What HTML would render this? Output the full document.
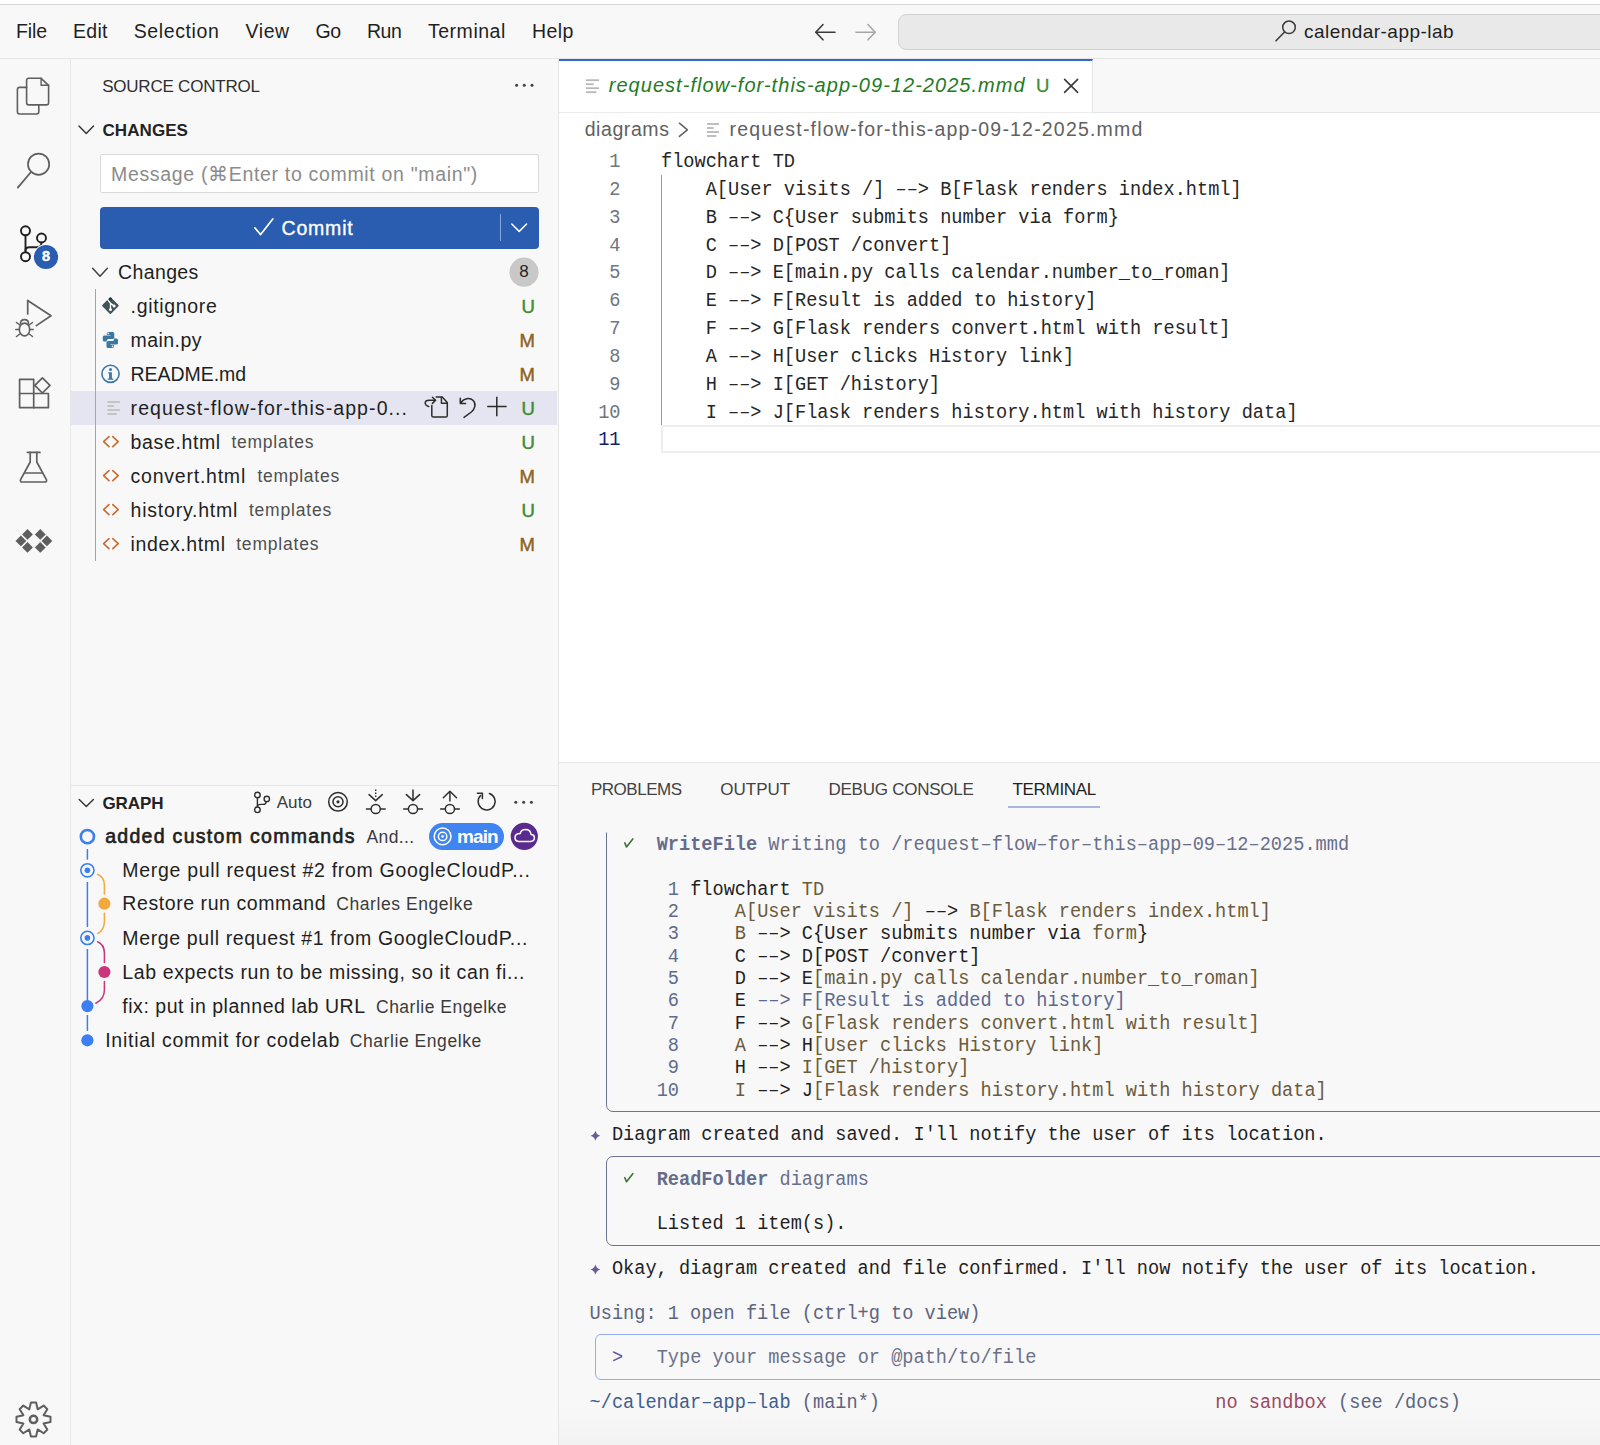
<!DOCTYPE html>
<html><head><meta charset="utf-8"><style>
html,body{margin:0;padding:0;}
body{width:1600px;height:1445px;overflow:hidden;position:relative;background:#f8f8f8;font-family:"Liberation Sans", sans-serif;}
.t{position:absolute;white-space:pre;line-height:1;}
.r{position:absolute;box-sizing:border-box;}
</style></head><body>
<div class="r" style="left:0px;top:0px;width:1600px;height:4px;background:#fff"></div>
<div class="r" style="left:0px;top:4px;width:1600px;height:1px;background:#d6d6d6"></div>
<div class="r" style="left:0px;top:58px;width:1600px;height:1px;background:#e5e5e5"></div>
<div class="r" style="left:898px;top:14px;width:720px;height:36px;background:#e9e9e9;border:1px solid #d2d2d2;border-radius:8px"></div>
<div class="r" style="left:70px;top:59px;width:1px;height:1386px;background:#e7e7e7"></div>
<div class="r" style="left:558px;top:59px;width:1px;height:1386px;background:#e5e5e5"></div>
<div class="r" style="left:100px;top:154px;width:439px;height:39px;background:#fff;border:1px solid #dadada;border-radius:2px"></div>
<div class="r" style="left:100px;top:207px;width:439px;height:42px;background:#2a5db0;border-radius:4px"></div>
<div class="r" style="left:500px;top:214px;width:1.3px;height:27px;background:#86a6dc"></div>
<div class="r" style="left:71px;top:391px;width:486px;height:34px;background:#e4e5f0"></div>
<div class="r" style="left:95px;top:289px;width:1px;height:272px;background:#a5a5a5"></div>
<div class="r" style="left:71px;top:785px;width:487px;height:1px;background:#e5e5e5"></div>
<div class="r" style="left:429.2px;top:822.8px;width:75.3px;height:27px;background:#3f84f0;border-radius:13.5px"></div>
<div class="r" style="left:559px;top:59px;width:1041px;height:54px;background:#f8f8f8;border-bottom:1px solid #e5e5e5"></div>
<div class="r" style="left:559px;top:59px;width:534px;height:54px;background:#fff;border-top:2px solid #3169c4;border-right:1px solid #e5e5e5;border-bottom:1px solid #ececec"></div>
<div class="r" style="left:559px;top:113px;width:1041px;height:649px;background:#fff"></div>
<div class="r" style="left:661px;top:425px;width:1000px;height:28px;border:2px solid #eeeeee;border-right:none"></div>
<div class="r" style="left:661px;top:174.5px;width:1.4px;height:250.5px;background:#9a9a9a"></div>
<div class="r" style="left:559px;top:762px;width:1041px;height:683px;background:#f8f8f8;border-top:1px solid #e5e5e5"></div>
<div class="r" style="left:1008px;top:805.5px;width:91.5px;height:2px;background:#aab6da"></div>
<div class="r" style="left:605.5px;top:820px;width:1100px;height:292px;border:1.8px solid #6d7290;border-radius:7px;clip-path:inset(12.5px -2px -2px -2px)"></div>
<div class="r" style="left:605.5px;top:1155.5px;width:1100px;height:90.5px;border:1.8px solid #6d7290;border-radius:7px"></div>
<div class="r" style="left:594.5px;top:1334px;width:1100px;height:46px;border:1.8px solid #8eaef0;border-radius:6px"></div>
<div class="r" style="left:559px;top:1405px;width:1041px;height:40px;background:linear-gradient(to bottom, rgba(0,0,0,0), rgba(0,0,0,0.025))"></div>
<svg class="r" style="left:0;top:0" width="1600" height="1445" viewBox="0 0 1600 1445" fill="none"><polyline points="823,24.5 815.8,32.2 823,39.8" stroke="#3b3b3b" stroke-width="1.6" fill="none" stroke-linejoin="round" stroke-linecap="round"/><line x1="816.2" y1="32.2" x2="835" y2="32.2" stroke="#3b3b3b" stroke-width="1.6" stroke-linecap="round"/><polyline points="868,24.5 875.2,32.2 868,39.8" stroke="#a6a6a6" stroke-width="1.6" fill="none" stroke-linejoin="round" stroke-linecap="round"/><line x1="856" y1="32.2" x2="874.8" y2="32.2" stroke="#a6a6a6" stroke-width="1.6" stroke-linecap="round"/><circle cx="1289" cy="27.3" r="6.3" stroke="#3b3b3b" stroke-width="1.5" fill="none"/><line x1="1284.6" y1="32" x2="1276" y2="40.8" stroke="#3b3b3b" stroke-width="1.6" stroke-linecap="round"/><path d="M26.6 87.4 H19.6 Q17.4 87.4 17.4 89.6 V111.8 Q17.4 114 19.6 114 H36.6 Q38.8 114 38.8 111.8 V104.9" stroke="#5f5f5f" stroke-width="1.6" fill="none" stroke-linejoin="round" stroke-linecap="round" /><path d="M28.8 78.3 H41.1 L48.6 85.3 V102.7 Q48.6 104.9 46.4 104.9 H28.8 Q26.6 104.9 26.6 102.7 V80.5 Q26.6 78.3 28.8 78.3 Z" stroke="#5f5f5f" stroke-width="1.6" fill="none" stroke-linejoin="round" stroke-linecap="round" /><path d="M41.1 78.3 V85.3 H48.6" stroke="#5f5f5f" stroke-width="1.4" fill="none" stroke-linejoin="round" stroke-linecap="round" /><circle cx="38.6" cy="164.2" r="10.6" stroke="#5f5f5f" stroke-width="1.7" fill="none"/><line x1="31" y1="172" x2="17.8" y2="187.6" stroke="#5f5f5f" stroke-width="1.8" stroke-linecap="round"/><circle cx="25.5" cy="230.8" r="4.5" stroke="#1f1f1f" stroke-width="1.9" fill="none"/><circle cx="41.5" cy="238" r="4.5" stroke="#1f1f1f" stroke-width="1.9" fill="none"/><circle cx="25.5" cy="256.7" r="4.5" stroke="#1f1f1f" stroke-width="1.9" fill="none"/><line x1="25.5" y1="235.3" x2="25.5" y2="252.2" stroke="#1f1f1f" stroke-width="1.9" stroke-linecap="butt"/><path d="M25.5 250.5 C25.5 248.2 27 247.3 29.5 247.3 H36.5 C39.5 247.3 41.5 245.6 41.5 242.5" stroke="#1f1f1f" stroke-width="1.9" fill="none" stroke-linejoin="round" stroke-linecap="round" /><circle cx="46" cy="257" r="12.9" fill="#f8f8f8"/><circle cx="46" cy="257" r="12.1" fill="#2a5db0"/><path d="M27.7 300.5 V314" stroke="#5f5f5f" stroke-width="1.7" fill="none" stroke-linejoin="round" stroke-linecap="round" /><path d="M27.7 300.5 L51 315.7 L36.3 325.6" stroke="#5f5f5f" stroke-width="1.7" fill="none" stroke-linejoin="round" stroke-linecap="round" /><path d="M20.5 323.5 Q20.5 319.6 24.5 319.6 Q28.5 319.6 28.5 323.5" stroke="#5f5f5f" stroke-width="1.6" fill="none" stroke-linejoin="round" stroke-linecap="round" /><ellipse cx="24.5" cy="329.5" rx="5.2" ry="6.4" stroke="#5f5f5f" stroke-width="1.6" fill="none"/><line x1="15.8" y1="329.5" x2="19.3" y2="329.5" stroke="#5f5f5f" stroke-width="1.5" stroke-linecap="round"/><line x1="29.7" y1="329.5" x2="33.2" y2="329.5" stroke="#5f5f5f" stroke-width="1.5" stroke-linecap="round"/><line x1="16.5" y1="322.5" x2="19.8" y2="325" stroke="#5f5f5f" stroke-width="1.5" stroke-linecap="round"/><line x1="32.5" y1="322.5" x2="29.2" y2="325" stroke="#5f5f5f" stroke-width="1.5" stroke-linecap="round"/><line x1="16.5" y1="336.5" x2="19.8" y2="334" stroke="#5f5f5f" stroke-width="1.5" stroke-linecap="round"/><line x1="32.5" y1="336.5" x2="29.2" y2="334" stroke="#5f5f5f" stroke-width="1.5" stroke-linecap="round"/><path d="M19.6 379.3 H33.7 V407.7 H19.6 Z" stroke="#5f5f5f" stroke-width="1.7" fill="none" stroke-linejoin="round" stroke-linecap="round" /><path d="M19.6 393.5 H48.4 V407.7 H33.7" stroke="#5f5f5f" stroke-width="1.7" fill="none" stroke-linejoin="round" stroke-linecap="round" /><path d="M42.4 377.8 L50 385.4 L42.4 393 L34.8 385.4 Z" stroke="#5f5f5f" stroke-width="1.7" fill="none" stroke-linejoin="round" stroke-linecap="round" /><path d="M27.4 452.4 H40" stroke="#5f5f5f" stroke-width="1.7" fill="none" stroke-linejoin="round" stroke-linecap="round" /><path d="M30.2 452.4 V462 L20.6 479.6 Q19.8 482 22.4 482 H44.6 Q47.2 482 46.4 479.6 L36.8 462 V452.4" stroke="#5f5f5f" stroke-width="1.7" fill="none" stroke-linejoin="round" stroke-linecap="round" /><line x1="24.8" y1="473" x2="42.2" y2="473" stroke="#5f5f5f" stroke-width="1.7" stroke-linecap="round"/><path d="M27.5 529.0 L32.9 534.4 L27.5 539.8 L22.1 534.4 Z" fill="#5f5f5f"/><path d="M20.9 535.5 L26.299999999999997 540.9 L20.9 546.3 L15.499999999999998 540.9 Z" fill="#5f5f5f"/><path d="M27.5 542.0 L32.9 547.4 L27.5 552.8 L22.1 547.4 Z" fill="#5f5f5f"/><path d="M40.3 529.0 L45.699999999999996 534.4 L40.3 539.8 L34.9 534.4 Z" fill="#5f5f5f"/><path d="M46.9 535.5 L52.3 540.9 L46.9 546.3 L41.5 540.9 Z" fill="#5f5f5f"/><path d="M40.3 542.0 L45.699999999999996 547.4 L40.3 552.8 L34.9 547.4 Z" fill="#5f5f5f"/><polygon points="29.33,1409.33 30.93,1402.39 36.07,1402.39 37.67,1409.33 43.71,1405.56 47.34,1409.19 43.57,1415.23 50.51,1416.83 50.51,1421.97 43.57,1423.57 47.34,1429.61 43.71,1433.24 37.67,1429.47 36.07,1436.41 30.93,1436.41 29.33,1429.47 23.29,1433.24 19.66,1429.61 23.43,1423.57 16.49,1421.97 16.49,1416.83 23.43,1415.23 19.66,1409.19 23.29,1405.56" stroke="#5f5f5f" stroke-width="2" fill="none" stroke-linejoin="round"/><circle cx="33.5" cy="1419.4" r="3.7" stroke="#5f5f5f" stroke-width="2.5" fill="none"/><circle cx="516.6" cy="85.3" r="1.5" fill="#424242"/><circle cx="524.3" cy="85.3" r="1.5" fill="#424242"/><circle cx="532" cy="85.3" r="1.5" fill="#424242"/><polyline points="79,126 86.25,133.6 93.5,126" stroke="#333333" stroke-width="1.4" fill="none" stroke-linejoin="round" stroke-linecap="round"/><polyline points="254.8,227.8 260.6,234.6 272.8,219" stroke="#fff" stroke-width="1.7" fill="none" stroke-linejoin="round" stroke-linecap="round"/><polyline points="511.8,224 519.2,231.4 526.6,224" stroke="#fff" stroke-width="1.5" fill="none" stroke-linejoin="round" stroke-linecap="round"/><polyline points="92.6,268.2 100.0,276.2 107.4,268.2" stroke="#424242" stroke-width="1.5" fill="none" stroke-linejoin="round" stroke-linecap="round"/><circle cx="524" cy="272.2" r="14.6" fill="#c8c8c8"/><path d="M110.4 298.20000000000005 L117.80000000000001 305.6 L110.4 313.0 L103.0 305.6 Z" fill="#41535b" stroke="#41535b" stroke-width="1.8" stroke-linejoin="round"/><path d="M107.0 298.6 L110.5 303.40000000000003 V309.40000000000003" stroke="#fff" stroke-width="1.3" fill="none" stroke-linejoin="round" stroke-linecap="round" /><path d="M110.5 303.40000000000003 L114.10000000000001 305.90000000000003" stroke="#fff" stroke-width="1.3" fill="none" stroke-linejoin="round" stroke-linecap="round" /><circle cx="110.5" cy="309.5" r="1.5" fill="#fff"/><circle cx="114.10000000000001" cy="305.90000000000003" r="1.5" fill="#fff"/><circle cx="110.35000000000001" cy="299.1" r="1.7" fill="#263a44"/><g transform="translate(102.8 332)"><path d="M6.2 0 H9.9 Q11.5 0 11.5 1.6 V5.4 Q11.5 7 9.9 7 H5.6 Q4 7 4 8.6 V9.6 H1.6 Q0 9.6 0 8 V5.1 Q0 3.5 1.6 3.5 H7.6 V2.9 H4 V1.6 Q4 0 6.2 0 Z" fill="#3a77a3"/><path d="M9 16 H5.3 Q3.7 16 3.7 14.4 V10.6 Q3.7 9 5.3 9 H9.6 Q11.2 9 11.2 7.4 V6.4 H13.6 Q15.2 6.4 15.2 8 V10.9 Q15.2 12.5 13.6 12.5 H7.6 V13.1 H11.2 V14.4 Q11.2 16 9 16 Z" fill="#3a77a3"/><circle cx="5.5" cy="1.6" r="0.8" fill="#f8f8f8"/><circle cx="9.7" cy="14.4" r="0.8" fill="#f8f8f8"/></g><circle cx="110.5" cy="373.8" r="8.6" stroke="#3a77a3" stroke-width="1.6" fill="none"/><circle cx="110.5" cy="369.6" r="1.5" fill="#3a77a3"/><path d="M108.2 372.3 H111.9 V378.6 H113.3 V379.8 H107.8 V378.6 H109.1 V373.5 H108.2 Z" fill="#3a77a3"/><line x1="107.4" y1="402" x2="119.8" y2="402" stroke="#c4c4c4" stroke-width="2" stroke-linecap="butt"/><line x1="107.4" y1="406" x2="114" y2="406" stroke="#c4c4c4" stroke-width="2" stroke-linecap="butt"/><line x1="107.4" y1="410" x2="119.8" y2="410" stroke="#c4c4c4" stroke-width="2" stroke-linecap="butt"/><line x1="107.4" y1="414" x2="116.8" y2="414" stroke="#c4c4c4" stroke-width="2" stroke-linecap="butt"/><polyline points="109,436.6 103.6,441.6 109,446.6" stroke="#c86b2f" stroke-width="1.6" fill="none" stroke-linejoin="round" stroke-linecap="round"/><polyline points="112.8,436.6 118.2,441.6 112.8,446.6" stroke="#c86b2f" stroke-width="1.6" fill="none" stroke-linejoin="round" stroke-linecap="round"/><polyline points="109,470.6 103.6,475.6 109,480.6" stroke="#c86b2f" stroke-width="1.6" fill="none" stroke-linejoin="round" stroke-linecap="round"/><polyline points="112.8,470.6 118.2,475.6 112.8,480.6" stroke="#c86b2f" stroke-width="1.6" fill="none" stroke-linejoin="round" stroke-linecap="round"/><polyline points="109,504.6 103.6,509.6 109,514.6" stroke="#c86b2f" stroke-width="1.6" fill="none" stroke-linejoin="round" stroke-linecap="round"/><polyline points="112.8,504.6 118.2,509.6 112.8,514.6" stroke="#c86b2f" stroke-width="1.6" fill="none" stroke-linejoin="round" stroke-linecap="round"/><polyline points="109,538.6 103.6,543.6 109,548.6" stroke="#c86b2f" stroke-width="1.6" fill="none" stroke-linejoin="round" stroke-linecap="round"/><polyline points="112.8,538.6 118.2,543.6 112.8,548.6" stroke="#c86b2f" stroke-width="1.6" fill="none" stroke-linejoin="round" stroke-linecap="round"/><path d="M431.8 405.6 V415.4 Q431.8 417 433.4 417 H445.7 Q447.3 417 447.3 415.4 V402.4 L442.2 397.1 H436.2" stroke="#2b2b2b" stroke-width="1.5" fill="none" stroke-linejoin="round" stroke-linecap="round" /><path d="M441.4 397.3 V403.2 H447.1" stroke="#2b2b2b" stroke-width="1.4" fill="none" stroke-linejoin="round" stroke-linecap="round" /><path d="M428.8 406.6 Q425.2 405.6 425.2 402.8 Q425.2 400.2 429.2 400.2 H435.4" stroke="#2b2b2b" stroke-width="1.5" fill="none" stroke-linejoin="round" stroke-linecap="round" /><polyline points="432.4,397.2 435.6,400.2 432.4,403.4" stroke="#2b2b2b" stroke-width="1.5" fill="none" stroke-linejoin="round" stroke-linecap="round"/><path d="M460.3 398.2 V403.5 H465.6" stroke="#2b2b2b" stroke-width="1.5" fill="none" stroke-linejoin="round" stroke-linecap="round" /><path d="M460.8 403 C463.4 398.5 469.6 396.8 473.2 400.6 C476.4 404 475 409 471.4 412 L464 417.4" stroke="#2b2b2b" stroke-width="1.5" fill="none" stroke-linejoin="round" stroke-linecap="round" /><line x1="496.8" y1="396.8" x2="496.8" y2="416.2" stroke="#2b2b2b" stroke-width="1.5" stroke-linecap="butt"/><line x1="487.2" y1="406.5" x2="506.6" y2="406.5" stroke="#2b2b2b" stroke-width="1.5" stroke-linecap="butt"/><polyline points="79.2,799.4 86.30000000000001,806.6 93.4,799.4" stroke="#333333" stroke-width="1.4" fill="none" stroke-linejoin="round" stroke-linecap="round"/><circle cx="257.4" cy="795" r="2.8" stroke="#2e2e2e" stroke-width="1.4" fill="none"/><circle cx="257.4" cy="809.8" r="2.8" stroke="#2e2e2e" stroke-width="1.4" fill="none"/><circle cx="266.8" cy="798.9" r="2.7" stroke="#2e2e2e" stroke-width="1.4" fill="none"/><line x1="257.4" y1="797.8" x2="257.4" y2="807" stroke="#2e2e2e" stroke-width="1.4" stroke-linecap="butt"/><path d="M257.4 806.2 C257.6 804.8 259 804.4 261 804.4 H263.4 C265 804.4 266 803.2 266.3 801.6" stroke="#2e2e2e" stroke-width="1.4" fill="none" stroke-linejoin="round" stroke-linecap="round" /><circle cx="338" cy="801.8" r="9.3" stroke="#2e2e2e" stroke-width="1.5" fill="none"/><circle cx="338" cy="801.8" r="5" stroke="#2e2e2e" stroke-width="1.5" fill="none"/><circle cx="338" cy="801.8" r="1.6" fill="#2e2e2e"/><circle cx="375.7" cy="809" r="4.6" stroke="#2e2e2e" stroke-width="1.5" fill="none"/><line x1="365.9" y1="809" x2="371.09999999999997" y2="809" stroke="#2e2e2e" stroke-width="1.5" stroke-linecap="butt"/><line x1="380.3" y1="809" x2="385.7" y2="809" stroke="#2e2e2e" stroke-width="1.5" stroke-linecap="butt"/><line x1="375.7" y1="789.6" x2="375.7" y2="798" stroke="#2e2e2e" stroke-width="1.4" stroke-dasharray="1.4 1.6"/><polyline points="369.09999999999997,794.6 375.7,800.6 382.3,794.6" stroke="#2e2e2e" stroke-width="1.5" fill="none" stroke-linejoin="round" stroke-linecap="round"/><circle cx="413" cy="809" r="4.6" stroke="#2e2e2e" stroke-width="1.5" fill="none"/><line x1="403.2" y1="809" x2="408.4" y2="809" stroke="#2e2e2e" stroke-width="1.5" stroke-linecap="butt"/><line x1="417.6" y1="809" x2="423" y2="809" stroke="#2e2e2e" stroke-width="1.5" stroke-linecap="butt"/><line x1="413" y1="789.6" x2="413" y2="800.4" stroke="#2e2e2e" stroke-width="1.5" stroke-linecap="butt"/><polyline points="406.4,794.6 413,800.6 419.6,794.6" stroke="#2e2e2e" stroke-width="1.5" fill="none" stroke-linejoin="round" stroke-linecap="round"/><circle cx="449.9" cy="809" r="4.6" stroke="#2e2e2e" stroke-width="1.5" fill="none"/><line x1="440.09999999999997" y1="809" x2="445.29999999999995" y2="809" stroke="#2e2e2e" stroke-width="1.5" stroke-linecap="butt"/><line x1="454.5" y1="809" x2="459.9" y2="809" stroke="#2e2e2e" stroke-width="1.5" stroke-linecap="butt"/><line x1="449.9" y1="791.4" x2="449.9" y2="801.6" stroke="#2e2e2e" stroke-width="1.5" stroke-linecap="butt"/><polyline points="443.29999999999995,797.8 449.9,791.2 456.5,797.8" stroke="#2e2e2e" stroke-width="1.5" fill="none" stroke-linejoin="round" stroke-linecap="round"/><path d="M489.4 793.5 A8.5 8.5 0 1 1 480.6 795.6" stroke="#2e2e2e" stroke-width="1.5" fill="none" stroke-linejoin="round" stroke-linecap="round" /><polyline points="477.4,793.3 482.4,793.3 482.4,798.4" stroke="#2e2e2e" stroke-width="1.5" fill="none" stroke-linejoin="round" stroke-linecap="round"/><circle cx="515.8" cy="802.2" r="1.5" fill="#424242"/><circle cx="523.6" cy="802.2" r="1.5" fill="#424242"/><circle cx="531.4" cy="802.2" r="1.5" fill="#424242"/><line x1="87.4" y1="849" x2="87.4" y2="859.6" stroke="#3b7ff2" stroke-width="1.5" stroke-linecap="butt"/><line x1="87.4" y1="882" x2="87.4" y2="927" stroke="#3b7ff2" stroke-width="1.5" stroke-linecap="butt"/><line x1="87.4" y1="949" x2="87.4" y2="1000.4" stroke="#3b7ff2" stroke-width="1.5" stroke-linecap="butt"/><line x1="87.4" y1="1015" x2="87.4" y2="1031" stroke="#3b7ff2" stroke-width="1.5" stroke-linecap="butt"/><circle cx="87.4" cy="836.6" r="6.6" stroke="#3b7ff2" stroke-width="2.6" fill="none"/><circle cx="87.4" cy="870.3" r="6.6" stroke="#3b7ff2" stroke-width="1.6" fill="none"/><circle cx="87.4" cy="870.3" r="2.8" fill="#3b7ff2"/><circle cx="87.4" cy="937.9" r="6.6" stroke="#3b7ff2" stroke-width="1.6" fill="none"/><circle cx="87.4" cy="937.9" r="2.8" fill="#3b7ff2"/><circle cx="104.4" cy="903.7" r="6.1" fill="#f2a93b"/><circle cx="104.4" cy="972" r="6.1" fill="#c8357a"/><circle cx="87.4" cy="1006.1" r="6.1" fill="#3b7ff2"/><circle cx="87.4" cy="1040.3" r="6.1" fill="#3b7ff2"/><path d="M97.6 874.3 C102.8 876.5 104.4 881 104.4 885.5 V894" stroke="#f2a93b" stroke-width="1.5" fill="none" stroke-linejoin="round" stroke-linecap="round" /><path d="M104.4 913.3 V921 C104.4 926 102.4 931 97.8 933.6" stroke="#f2a93b" stroke-width="1.5" fill="none" stroke-linejoin="round" stroke-linecap="round" /><path d="M97.6 941.8 C102.8 944 104.4 948.5 104.4 953 V962.4" stroke="#c8357a" stroke-width="1.5" fill="none" stroke-linejoin="round" stroke-linecap="round" /><path d="M104.4 981.6 V990 C104.4 995 101.8 1000.4 95.8 1003.2" stroke="#c8357a" stroke-width="1.5" fill="none" stroke-linejoin="round" stroke-linecap="round" /><circle cx="442.6" cy="836.4" r="8.4" stroke="#fff" stroke-width="1.5" fill="none"/><circle cx="442.6" cy="836.4" r="4.2" stroke="#fff" stroke-width="1.5" fill="none"/><circle cx="442.6" cy="836.4" r="1.3" fill="#fff"/><circle cx="524.3" cy="836.3" r="13.6" fill="#5b2a8e"/><path d="M518.6 841.4 H530.4 C533.2 841.4 534.4 839.6 534.4 837.8 C534.4 835.8 532.9 834.4 531 834.4 C530.6 831.6 528.2 829.6 525.4 829.6 C522.8 829.6 520.8 831.2 520.1 833.5 C517 833.5 515 835.2 515 837.6 C515 839.8 516.6 841.4 518.6 841.4 Z" stroke="#fff" stroke-width="1.5" fill="none" stroke-linejoin="round" stroke-linecap="round" /><line x1="586" y1="80.2" x2="599" y2="80.2" stroke="#b8b8b8" stroke-width="1.8" stroke-linecap="butt"/><line x1="586" y1="84.2" x2="593.6" y2="84.2" stroke="#b8b8b8" stroke-width="1.8" stroke-linecap="butt"/><line x1="586" y1="88.2" x2="599" y2="88.2" stroke="#b8b8b8" stroke-width="1.8" stroke-linecap="butt"/><line x1="586" y1="92.2" x2="596.4" y2="92.2" stroke="#b8b8b8" stroke-width="1.8" stroke-linecap="butt"/><line x1="1064.6" y1="79.4" x2="1077.6" y2="92.4" stroke="#3b3b3b" stroke-width="1.6" stroke-linecap="round"/><line x1="1077.6" y1="79.4" x2="1064.6" y2="92.4" stroke="#3b3b3b" stroke-width="1.6" stroke-linecap="round"/><polyline points="679.4,123.2 687.4,129.8 679.4,136.4" stroke="#616161" stroke-width="1.5" fill="none" stroke-linejoin="round" stroke-linecap="round"/><line x1="707" y1="124" x2="719" y2="124" stroke="#b8b8b8" stroke-width="1.8" stroke-linecap="butt"/><line x1="707" y1="128" x2="713.6" y2="128" stroke="#b8b8b8" stroke-width="1.8" stroke-linecap="butt"/><line x1="707" y1="132" x2="719" y2="132" stroke="#b8b8b8" stroke-width="1.8" stroke-linecap="butt"/><line x1="707" y1="136" x2="716.4" y2="136" stroke="#b8b8b8" stroke-width="1.8" stroke-linecap="butt"/><path d="M624.8 842.9 L626.5 846.9 L632.8 838.9" stroke="#3d6f35" stroke-width="1.6" fill="none" stroke-linejoin="round" stroke-linecap="round" /><path d="M595.4 1130.66 Q596.4 1134.66 600.1999999999999 1135.66 Q596.4 1136.66 595.4 1140.66 Q594.4 1136.66 590.6 1135.66 Q594.4 1134.66 595.4 1130.66 Z" fill="#6a5a96"/><path d="M624.8 1177.6999999999998 L626.5 1181.6999999999998 L632.8 1173.6999999999998" stroke="#3d6f35" stroke-width="1.6" fill="none" stroke-linejoin="round" stroke-linecap="round" /><path d="M595.4 1264.58 Q596.4 1268.58 600.1999999999999 1269.58 Q596.4 1270.58 595.4 1274.58 Q594.4 1270.58 590.6 1269.58 Q594.4 1268.58 595.4 1264.58 Z" fill="#6a5a96"/></svg>
<span id="t0" class="t" style="left:16.00px;top:21.89px;font-size:19.5px;color:#1f1f1f;letter-spacing:-0.130px;">File</span>
<span id="t1" class="t" style="left:73.00px;top:21.89px;font-size:19.5px;color:#1f1f1f;letter-spacing:0.298px;">Edit</span>
<span id="t2" class="t" style="left:133.70px;top:21.89px;font-size:19.5px;color:#1f1f1f;letter-spacing:0.607px;">Selection</span>
<span id="t3" class="t" style="left:245.60px;top:21.89px;font-size:19.5px;color:#1f1f1f;letter-spacing:0.545px;">View</span>
<span id="t4" class="t" style="left:315.40px;top:21.89px;font-size:19.5px;color:#1f1f1f;letter-spacing:-0.258px;">Go</span>
<span id="t5" class="t" style="left:367.00px;top:21.89px;font-size:19.5px;color:#1f1f1f;letter-spacing:-0.494px;">Run</span>
<span id="t6" class="t" style="left:428.00px;top:21.89px;font-size:19.5px;color:#1f1f1f;letter-spacing:0.512px;">Terminal</span>
<span id="t7" class="t" style="left:532.00px;top:21.89px;font-size:19.5px;color:#1f1f1f;letter-spacing:0.448px;">Help</span>
<span id="t8" class="t" style="left:1304.00px;top:21.71px;font-size:19px;color:#1f1f1f;letter-spacing:0.462px;">calendar-app-lab</span>
<span class="t" style="left:34px;top:248.6px;width:24px;text-align:center;font-size:14.5px;font-weight:700;color:#fff;-webkit-text-stroke:0.4px #fff">8</span>
<span id="t9" class="t" style="left:102.20px;top:78.01px;font-size:17px;color:#2e2e2e;letter-spacing:-0.220px;">SOURCE CONTROL</span>
<span id="t10" class="t" style="left:102.50px;top:121.61px;font-size:17px;color:#222222;font-weight:700;letter-spacing:0.069px;">CHANGES</span>
<span id="t11" class="t" style="left:111.00px;top:165.09px;font-size:19.5px;color:#8b8b8b;letter-spacing:0.675px;">Message (⌘Enter to commit on "main")</span>
<span id="t12" class="t" style="left:281.50px;top:219.29px;font-size:19.5px;color:#fff;letter-spacing:0.805px;-webkit-text-stroke:0.35px #fff;">Commit</span>
<span id="t13" class="t" style="left:118.00px;top:263.09px;font-size:19.5px;color:#1f1f1f;letter-spacing:0.377px;">Changes</span>
<span class="t" style="left:509.4px;top:263.2px;width:29.2px;text-align:center;font-size:17px;color:#1f1f1f">8</span>
<span id="t14" class="t" style="left:130.60px;top:296.79px;font-size:19.5px;color:#1f1f1f;letter-spacing:0.668px;">.gitignore</span>
<span id="t15" class="t" style="left:521.60px;top:297.64px;font-size:18.5px;color:#3f8c35;letter-spacing:-1.766px;-webkit-text-stroke:0.45px #3f8c35;">U</span>
<span id="t16" class="t" style="left:130.60px;top:330.79px;font-size:19.5px;color:#1f1f1f;letter-spacing:0.431px;">main.py</span>
<span id="t17" class="t" style="left:519.40px;top:331.64px;font-size:18.5px;color:#8d6424;letter-spacing:-1.822px;-webkit-text-stroke:0.45px #8d6424;">M</span>
<span id="t18" class="t" style="left:130.60px;top:364.79px;font-size:19.5px;color:#1f1f1f;letter-spacing:-0.060px;">README.md</span>
<span id="t19" class="t" style="left:519.40px;top:365.64px;font-size:18.5px;color:#8d6424;letter-spacing:-1.822px;-webkit-text-stroke:0.45px #8d6424;">M</span>
<span id="t20" class="t" style="left:130.60px;top:398.79px;font-size:19.5px;color:#1f1f1f;letter-spacing:1.085px;">request-flow-for-this-app-0...</span>
<span id="t21" class="t" style="left:521.60px;top:399.64px;font-size:18.5px;color:#3f8c35;letter-spacing:-1.766px;-webkit-text-stroke:0.45px #3f8c35;">U</span>
<span id="t22" class="t" style="left:130.60px;top:432.79px;font-size:19.5px;color:#1f1f1f;letter-spacing:0.628px;">base.html</span>
<span id="t23" class="t" style="left:231.40px;top:434.48px;font-size:17.5px;color:#4f4f4f;letter-spacing:0.769px;">templates</span>
<span id="t24" class="t" style="left:521.60px;top:433.64px;font-size:18.5px;color:#3f8c35;letter-spacing:-1.766px;-webkit-text-stroke:0.45px #3f8c35;">U</span>
<span id="t25" class="t" style="left:130.60px;top:466.79px;font-size:19.5px;color:#1f1f1f;letter-spacing:0.765px;">convert.html</span>
<span id="t26" class="t" style="left:257.40px;top:468.48px;font-size:17.5px;color:#4f4f4f;letter-spacing:0.736px;">templates</span>
<span id="t27" class="t" style="left:519.40px;top:467.64px;font-size:18.5px;color:#8d6424;letter-spacing:-1.822px;-webkit-text-stroke:0.45px #8d6424;">M</span>
<span id="t28" class="t" style="left:130.60px;top:500.79px;font-size:19.5px;color:#1f1f1f;letter-spacing:0.779px;">history.html</span>
<span id="t29" class="t" style="left:248.90px;top:502.48px;font-size:17.5px;color:#4f4f4f;letter-spacing:0.814px;">templates</span>
<span id="t30" class="t" style="left:521.60px;top:501.64px;font-size:18.5px;color:#3f8c35;letter-spacing:-1.766px;-webkit-text-stroke:0.45px #3f8c35;">U</span>
<span id="t31" class="t" style="left:130.60px;top:534.79px;font-size:19.5px;color:#1f1f1f;letter-spacing:0.622px;">index.html</span>
<span id="t32" class="t" style="left:236.20px;top:536.48px;font-size:17.5px;color:#4f4f4f;letter-spacing:0.814px;">templates</span>
<span id="t33" class="t" style="left:519.40px;top:535.64px;font-size:18.5px;color:#8d6424;letter-spacing:-1.822px;-webkit-text-stroke:0.45px #8d6424;">M</span>
<span id="t34" class="t" style="left:102.50px;top:794.61px;font-size:17px;color:#222222;font-weight:700;letter-spacing:-0.101px;">GRAPH</span>
<span id="t35" class="t" style="left:276.70px;top:793.81px;font-size:17px;color:#3b3b3b;letter-spacing:0.079px;">Auto</span>
<span id="t36" class="t" style="left:105.20px;top:827.09px;font-size:19.5px;color:#1f1f1f;letter-spacing:1.296px;-webkit-text-stroke:0.65px #1f1f1f;">added custom commands</span>
<span id="t37" class="t" style="left:366.50px;top:828.58px;font-size:17.5px;color:#3b3b3b;letter-spacing:0.378px;">And...</span>
<span id="t38" class="t" style="left:457.00px;top:826.51px;font-size:19px;color:#fff;font-weight:700;letter-spacing:-0.915px;">main</span>
<span id="t39" class="t" style="left:122.30px;top:861.09px;font-size:19.5px;color:#1f1f1f;letter-spacing:0.697px;">Merge pull request #2 from GoogleCloudP...</span>
<span id="t40" class="t" style="left:122.30px;top:894.49px;font-size:19.5px;color:#1f1f1f;letter-spacing:0.578px;">Restore run command</span>
<span id="t41" class="t" style="left:336.30px;top:896.18px;font-size:17.5px;color:#3b3b3b;letter-spacing:0.565px;">Charles Engelke</span>
<span id="t42" class="t" style="left:122.30px;top:928.69px;font-size:19.5px;color:#1f1f1f;letter-spacing:0.635px;">Merge pull request #1 from GoogleCloudP...</span>
<span id="t43" class="t" style="left:122.30px;top:962.79px;font-size:19.5px;color:#1f1f1f;letter-spacing:0.626px;">Lab expects run to be missing, so it can fi...</span>
<span id="t44" class="t" style="left:122.30px;top:996.89px;font-size:19.5px;color:#1f1f1f;letter-spacing:0.539px;">fix: put in planned lab URL</span>
<span id="t45" class="t" style="left:376.00px;top:998.58px;font-size:17.5px;color:#3b3b3b;letter-spacing:0.497px;">Charlie Engelke</span>
<span id="t46" class="t" style="left:105.20px;top:1031.09px;font-size:19.5px;color:#1f1f1f;letter-spacing:0.736px;">Initial commit for codelab</span>
<span id="t47" class="t" style="left:349.80px;top:1032.78px;font-size:17.5px;color:#3b3b3b;letter-spacing:0.562px;">Charlie Engelke</span>
<span id="t48" class="t" style="left:608.70px;top:75.37px;font-size:20px;color:#237a23;font-style:italic;letter-spacing:1.041px;">request-flow-for-this-app-09-12-2025.mmd</span>
<span id="t49" class="t" style="left:1036.00px;top:76.64px;font-size:18.5px;color:#3f8c35;letter-spacing:-0.375px;-webkit-text-stroke:0.3px #3f8c35;">U</span>
<span id="t50" class="t" style="left:584.70px;top:119.99px;font-size:19.5px;color:#616161;letter-spacing:0.575px;">diagrams</span>
<span id="t51" class="t" style="left:729.50px;top:119.99px;font-size:19.5px;color:#616161;letter-spacing:1.192px;">request-flow-for-this-app-09-12-2025.mmd</span>
<span id="t52" class="t" style="left:609.33px;top:153.14px;font-size:18.62px;color:#6e7681;font-family:'Liberation Mono', monospace;transform:scaleY(1.1);transform-origin:0 14.26px;">1</span>
<span id="t53" class="t" style="left:661.00px;top:153.14px;font-size:18.62px;color:#262626;font-family:'Liberation Mono', monospace;transform:scaleY(1.1);transform-origin:0 14.26px;">flowchart TD</span>
<span id="t54" class="t" style="left:609.33px;top:180.96px;font-size:18.62px;color:#6e7681;font-family:'Liberation Mono', monospace;transform:scaleY(1.1);transform-origin:0 14.26px;">2</span>
<span id="t55" class="t" style="left:661.00px;top:180.96px;font-size:18.62px;color:#262626;font-family:'Liberation Mono', monospace;transform:scaleY(1.1);transform-origin:0 14.26px;">    A[User visits /] ––&gt; B[Flask renders index.html]</span>
<span id="t56" class="t" style="left:609.33px;top:208.78px;font-size:18.62px;color:#6e7681;font-family:'Liberation Mono', monospace;transform:scaleY(1.1);transform-origin:0 14.26px;">3</span>
<span id="t57" class="t" style="left:661.00px;top:208.78px;font-size:18.62px;color:#262626;font-family:'Liberation Mono', monospace;transform:scaleY(1.1);transform-origin:0 14.26px;">    B ––&gt; C{User submits number via form}</span>
<span id="t58" class="t" style="left:609.33px;top:236.60px;font-size:18.62px;color:#6e7681;font-family:'Liberation Mono', monospace;transform:scaleY(1.1);transform-origin:0 14.26px;">4</span>
<span id="t59" class="t" style="left:661.00px;top:236.60px;font-size:18.62px;color:#262626;font-family:'Liberation Mono', monospace;transform:scaleY(1.1);transform-origin:0 14.26px;">    C ––&gt; D[POST /convert]</span>
<span id="t60" class="t" style="left:609.33px;top:264.42px;font-size:18.62px;color:#6e7681;font-family:'Liberation Mono', monospace;transform:scaleY(1.1);transform-origin:0 14.26px;">5</span>
<span id="t61" class="t" style="left:661.00px;top:264.42px;font-size:18.62px;color:#262626;font-family:'Liberation Mono', monospace;transform:scaleY(1.1);transform-origin:0 14.26px;">    D ––&gt; E[main.py calls calendar.number_to_roman]</span>
<span id="t62" class="t" style="left:609.33px;top:292.24px;font-size:18.62px;color:#6e7681;font-family:'Liberation Mono', monospace;transform:scaleY(1.1);transform-origin:0 14.26px;">6</span>
<span id="t63" class="t" style="left:661.00px;top:292.24px;font-size:18.62px;color:#262626;font-family:'Liberation Mono', monospace;transform:scaleY(1.1);transform-origin:0 14.26px;">    E ––&gt; F[Result is added to history]</span>
<span id="t64" class="t" style="left:609.33px;top:320.06px;font-size:18.62px;color:#6e7681;font-family:'Liberation Mono', monospace;transform:scaleY(1.1);transform-origin:0 14.26px;">7</span>
<span id="t65" class="t" style="left:661.00px;top:320.06px;font-size:18.62px;color:#262626;font-family:'Liberation Mono', monospace;transform:scaleY(1.1);transform-origin:0 14.26px;">    F ––&gt; G[Flask renders convert.html with result]</span>
<span id="t66" class="t" style="left:609.33px;top:347.88px;font-size:18.62px;color:#6e7681;font-family:'Liberation Mono', monospace;transform:scaleY(1.1);transform-origin:0 14.26px;">8</span>
<span id="t67" class="t" style="left:661.00px;top:347.88px;font-size:18.62px;color:#262626;font-family:'Liberation Mono', monospace;transform:scaleY(1.1);transform-origin:0 14.26px;">    A ––&gt; H[User clicks History link]</span>
<span id="t68" class="t" style="left:609.33px;top:375.70px;font-size:18.62px;color:#6e7681;font-family:'Liberation Mono', monospace;transform:scaleY(1.1);transform-origin:0 14.26px;">9</span>
<span id="t69" class="t" style="left:661.00px;top:375.70px;font-size:18.62px;color:#262626;font-family:'Liberation Mono', monospace;transform:scaleY(1.1);transform-origin:0 14.26px;">    H ––&gt; I[GET /history]</span>
<span id="t70" class="t" style="left:598.16px;top:403.52px;font-size:18.62px;color:#6e7681;font-family:'Liberation Mono', monospace;transform:scaleY(1.1);transform-origin:0 14.26px;">10</span>
<span id="t71" class="t" style="left:661.00px;top:403.52px;font-size:18.62px;color:#262626;font-family:'Liberation Mono', monospace;transform:scaleY(1.1);transform-origin:0 14.26px;">    I ––&gt; J[Flask renders history.html with history data]</span>
<span id="t72" class="t" style="left:598.16px;top:431.34px;font-size:18.62px;color:#0b216f;font-family:'Liberation Mono', monospace;transform:scaleY(1.1);transform-origin:0 14.26px;">11</span>
<span id="t73" class="t" style="left:591.00px;top:780.91px;font-size:17px;color:#424242;letter-spacing:-0.498px;">PROBLEMS</span>
<span id="t74" class="t" style="left:720.30px;top:780.91px;font-size:17px;color:#424242;letter-spacing:-0.015px;">OUTPUT</span>
<span id="t75" class="t" style="left:828.50px;top:780.91px;font-size:17px;color:#424242;letter-spacing:-0.255px;">DEBUG CONSOLE</span>
<span id="t76" class="t" style="left:1012.50px;top:780.91px;font-size:17px;color:#1f1f1f;letter-spacing:-0.307px;">TERMINAL</span>
<span id="t77" class="t" style="left:656.63px;top:836.04px;font-size:18.62px;color:#666d8a;font-weight:700;font-family:'Liberation Mono', monospace;transform:scaleY(1.1);transform-origin:0 14.26px;">WriteFile</span>
<span id="t78" class="t" style="left:757.18px;top:836.04px;font-size:18.62px;color:#686f8c;font-family:'Liberation Mono', monospace;transform:scaleY(1.1);transform-origin:0 14.26px;"> Writing to /request–flow–for–this–app–09–12–2025.mmd</span>
<span id="t79" class="t" style="left:667.80px;top:880.68px;font-size:18.62px;color:#5f6b8c;font-family:'Liberation Mono', monospace;transform:scaleY(1.1);transform-origin:0 14.26px;">1</span>
<span id="t80" class="t" style="left:690.15px;top:880.68px;font-size:18.62px;color:#1f1f1f;font-family:'Liberation Mono', monospace;transform:scaleY(1.1);transform-origin:0 14.26px;">flowchart</span>
<span id="t81" class="t" style="left:790.70px;top:880.68px;font-size:18.62px;color:#6b5b3d;font-family:'Liberation Mono', monospace;transform:scaleY(1.1);transform-origin:0 14.26px;"> TD</span>
<span id="t82" class="t" style="left:667.80px;top:903.00px;font-size:18.62px;color:#5f6b8c;font-family:'Liberation Mono', monospace;transform:scaleY(1.1);transform-origin:0 14.26px;">2</span>
<span id="t83" class="t" style="left:690.15px;top:903.00px;font-size:18.62px;color:#6b5b3d;font-family:'Liberation Mono', monospace;transform:scaleY(1.1);transform-origin:0 14.26px;">    A[User visits /]</span>
<span id="t84" class="t" style="left:913.59px;top:903.00px;font-size:18.62px;color:#1f1f1f;font-family:'Liberation Mono', monospace;transform:scaleY(1.1);transform-origin:0 14.26px;"> ––&gt; </span>
<span id="t85" class="t" style="left:969.45px;top:903.00px;font-size:18.62px;color:#6b5b3d;font-family:'Liberation Mono', monospace;transform:scaleY(1.1);transform-origin:0 14.26px;">B[Flask renders index.html]</span>
<span id="t86" class="t" style="left:667.80px;top:925.32px;font-size:18.62px;color:#5f6b8c;font-family:'Liberation Mono', monospace;transform:scaleY(1.1);transform-origin:0 14.26px;">3</span>
<span id="t87" class="t" style="left:690.15px;top:925.32px;font-size:18.62px;color:#6b5b3d;font-family:'Liberation Mono', monospace;transform:scaleY(1.1);transform-origin:0 14.26px;">    B</span>
<span id="t88" class="t" style="left:746.01px;top:925.32px;font-size:18.62px;color:#1f1f1f;font-family:'Liberation Mono', monospace;transform:scaleY(1.1);transform-origin:0 14.26px;"> ––&gt; C{User submits number via </span>
<span id="t89" class="t" style="left:1092.34px;top:925.32px;font-size:18.62px;color:#6b5b3d;font-family:'Liberation Mono', monospace;transform:scaleY(1.1);transform-origin:0 14.26px;">form</span>
<span id="t90" class="t" style="left:1137.03px;top:925.32px;font-size:18.62px;color:#1f1f1f;font-family:'Liberation Mono', monospace;transform:scaleY(1.1);transform-origin:0 14.26px;">}</span>
<span id="t91" class="t" style="left:667.80px;top:947.64px;font-size:18.62px;color:#5f6b8c;font-family:'Liberation Mono', monospace;transform:scaleY(1.1);transform-origin:0 14.26px;">4</span>
<span id="t92" class="t" style="left:690.15px;top:947.64px;font-size:18.62px;color:#1f1f1f;font-family:'Liberation Mono', monospace;transform:scaleY(1.1);transform-origin:0 14.26px;">    C ––&gt; D[POST /convert]</span>
<span id="t93" class="t" style="left:667.80px;top:969.96px;font-size:18.62px;color:#5f6b8c;font-family:'Liberation Mono', monospace;transform:scaleY(1.1);transform-origin:0 14.26px;">5</span>
<span id="t94" class="t" style="left:690.15px;top:969.96px;font-size:18.62px;color:#1f1f1f;font-family:'Liberation Mono', monospace;transform:scaleY(1.1);transform-origin:0 14.26px;">    D ––&gt; E</span>
<span id="t95" class="t" style="left:813.04px;top:969.96px;font-size:18.62px;color:#6b5b3d;font-family:'Liberation Mono', monospace;transform:scaleY(1.1);transform-origin:0 14.26px;">[main.py calls calendar.number_to_roman]</span>
<span id="t96" class="t" style="left:667.80px;top:992.28px;font-size:18.62px;color:#5f6b8c;font-family:'Liberation Mono', monospace;transform:scaleY(1.1);transform-origin:0 14.26px;">6</span>
<span id="t97" class="t" style="left:690.15px;top:992.28px;font-size:18.62px;color:#1f1f1f;font-family:'Liberation Mono', monospace;transform:scaleY(1.1);transform-origin:0 14.26px;">    E</span>
<span id="t98" class="t" style="left:746.01px;top:992.28px;font-size:18.62px;color:#5d6890;font-family:'Liberation Mono', monospace;transform:scaleY(1.1);transform-origin:0 14.26px;"> ––&gt; F[Result is added to history]</span>
<span id="t99" class="t" style="left:667.80px;top:1014.60px;font-size:18.62px;color:#5f6b8c;font-family:'Liberation Mono', monospace;transform:scaleY(1.1);transform-origin:0 14.26px;">7</span>
<span id="t100" class="t" style="left:690.15px;top:1014.60px;font-size:18.62px;color:#1f1f1f;font-family:'Liberation Mono', monospace;transform:scaleY(1.1);transform-origin:0 14.26px;">    F ––&gt; </span>
<span id="t101" class="t" style="left:801.87px;top:1014.60px;font-size:18.62px;color:#6b5b3d;font-family:'Liberation Mono', monospace;transform:scaleY(1.1);transform-origin:0 14.26px;">G[Flask renders convert.html with result]</span>
<span id="t102" class="t" style="left:667.80px;top:1036.92px;font-size:18.62px;color:#5f6b8c;font-family:'Liberation Mono', monospace;transform:scaleY(1.1);transform-origin:0 14.26px;">8</span>
<span id="t103" class="t" style="left:690.15px;top:1036.92px;font-size:18.62px;color:#6b5b3d;font-family:'Liberation Mono', monospace;transform:scaleY(1.1);transform-origin:0 14.26px;">    A</span>
<span id="t104" class="t" style="left:746.01px;top:1036.92px;font-size:18.62px;color:#1f1f1f;font-family:'Liberation Mono', monospace;transform:scaleY(1.1);transform-origin:0 14.26px;"> ––&gt; H</span>
<span id="t105" class="t" style="left:813.04px;top:1036.92px;font-size:18.62px;color:#6b5b3d;font-family:'Liberation Mono', monospace;transform:scaleY(1.1);transform-origin:0 14.26px;">[User clicks History link]</span>
<span id="t106" class="t" style="left:667.80px;top:1059.24px;font-size:18.62px;color:#5f6b8c;font-family:'Liberation Mono', monospace;transform:scaleY(1.1);transform-origin:0 14.26px;">9</span>
<span id="t107" class="t" style="left:690.15px;top:1059.24px;font-size:18.62px;color:#1f1f1f;font-family:'Liberation Mono', monospace;transform:scaleY(1.1);transform-origin:0 14.26px;">    H ––&gt; </span>
<span id="t108" class="t" style="left:801.87px;top:1059.24px;font-size:18.62px;color:#6b5b3d;font-family:'Liberation Mono', monospace;transform:scaleY(1.1);transform-origin:0 14.26px;">I[GET /history]</span>
<span id="t109" class="t" style="left:656.63px;top:1081.56px;font-size:18.62px;color:#5f6b8c;font-family:'Liberation Mono', monospace;transform:scaleY(1.1);transform-origin:0 14.26px;">10</span>
<span id="t110" class="t" style="left:690.15px;top:1081.56px;font-size:18.62px;color:#6b5b3d;font-family:'Liberation Mono', monospace;transform:scaleY(1.1);transform-origin:0 14.26px;">    I</span>
<span id="t111" class="t" style="left:746.01px;top:1081.56px;font-size:18.62px;color:#1f1f1f;font-family:'Liberation Mono', monospace;transform:scaleY(1.1);transform-origin:0 14.26px;"> ––&gt; J</span>
<span id="t112" class="t" style="left:813.04px;top:1081.56px;font-size:18.62px;color:#6b5b3d;font-family:'Liberation Mono', monospace;transform:scaleY(1.1);transform-origin:0 14.26px;">[Flask renders history.html with history data]</span>
<span id="t113" class="t" style="left:611.94px;top:1126.20px;font-size:18.62px;color:#1f1f1f;font-family:'Liberation Mono', monospace;transform:scaleY(1.1);transform-origin:0 14.26px;">Diagram created and saved. I'll notify the user of its location.</span>
<span id="t114" class="t" style="left:656.63px;top:1170.84px;font-size:18.62px;color:#666d8a;font-weight:700;font-family:'Liberation Mono', monospace;transform:scaleY(1.1);transform-origin:0 14.26px;">ReadFolder</span>
<span id="t115" class="t" style="left:768.35px;top:1170.84px;font-size:18.62px;color:#686f8c;font-family:'Liberation Mono', monospace;transform:scaleY(1.1);transform-origin:0 14.26px;"> diagrams</span>
<span id="t116" class="t" style="left:656.63px;top:1215.48px;font-size:18.62px;color:#1f1f1f;font-family:'Liberation Mono', monospace;transform:scaleY(1.1);transform-origin:0 14.26px;">Listed 1 item(s).</span>
<span id="t117" class="t" style="left:611.94px;top:1260.12px;font-size:18.62px;color:#1f1f1f;font-family:'Liberation Mono', monospace;transform:scaleY(1.1);transform-origin:0 14.26px;">Okay, diagram created and file confirmed. I'll now notify the user of its location.</span>
<span id="t118" class="t" style="left:589.60px;top:1304.76px;font-size:18.62px;color:#5d6480;font-family:'Liberation Mono', monospace;transform:scaleY(1.1);transform-origin:0 14.26px;">Using: 1 open file (ctrl+g to view)</span>
<span id="t119" class="t" style="left:611.94px;top:1349.40px;font-size:18.62px;color:#66599a;font-family:'Liberation Mono', monospace;transform:scaleY(1.1);transform-origin:0 14.26px;">&gt;</span>
<span id="t120" class="t" style="left:656.63px;top:1349.40px;font-size:18.62px;color:#6b7189;font-family:'Liberation Mono', monospace;transform:scaleY(1.1);transform-origin:0 14.26px;">Type your message or @path/to/file</span>
<span id="t121" class="t" style="left:589.60px;top:1394.04px;font-size:18.62px;color:#3e5e8e;font-family:'Liberation Mono', monospace;transform:scaleY(1.1);transform-origin:0 14.26px;">~/calendar–app–lab</span>
<span id="t122" class="t" style="left:790.70px;top:1394.04px;font-size:18.62px;color:#5d6480;font-family:'Liberation Mono', monospace;transform:scaleY(1.1);transform-origin:0 14.26px;"> (main*)</span>
<span id="t123" class="t" style="left:1215.23px;top:1394.04px;font-size:18.62px;color:#9a4862;font-family:'Liberation Mono', monospace;transform:scaleY(1.1);transform-origin:0 14.26px;">no sandbox</span>
<span id="t124" class="t" style="left:1326.95px;top:1394.04px;font-size:18.62px;color:#5d6480;font-family:'Liberation Mono', monospace;transform:scaleY(1.1);transform-origin:0 14.26px;"> (see /docs)</span>
</body></html>
